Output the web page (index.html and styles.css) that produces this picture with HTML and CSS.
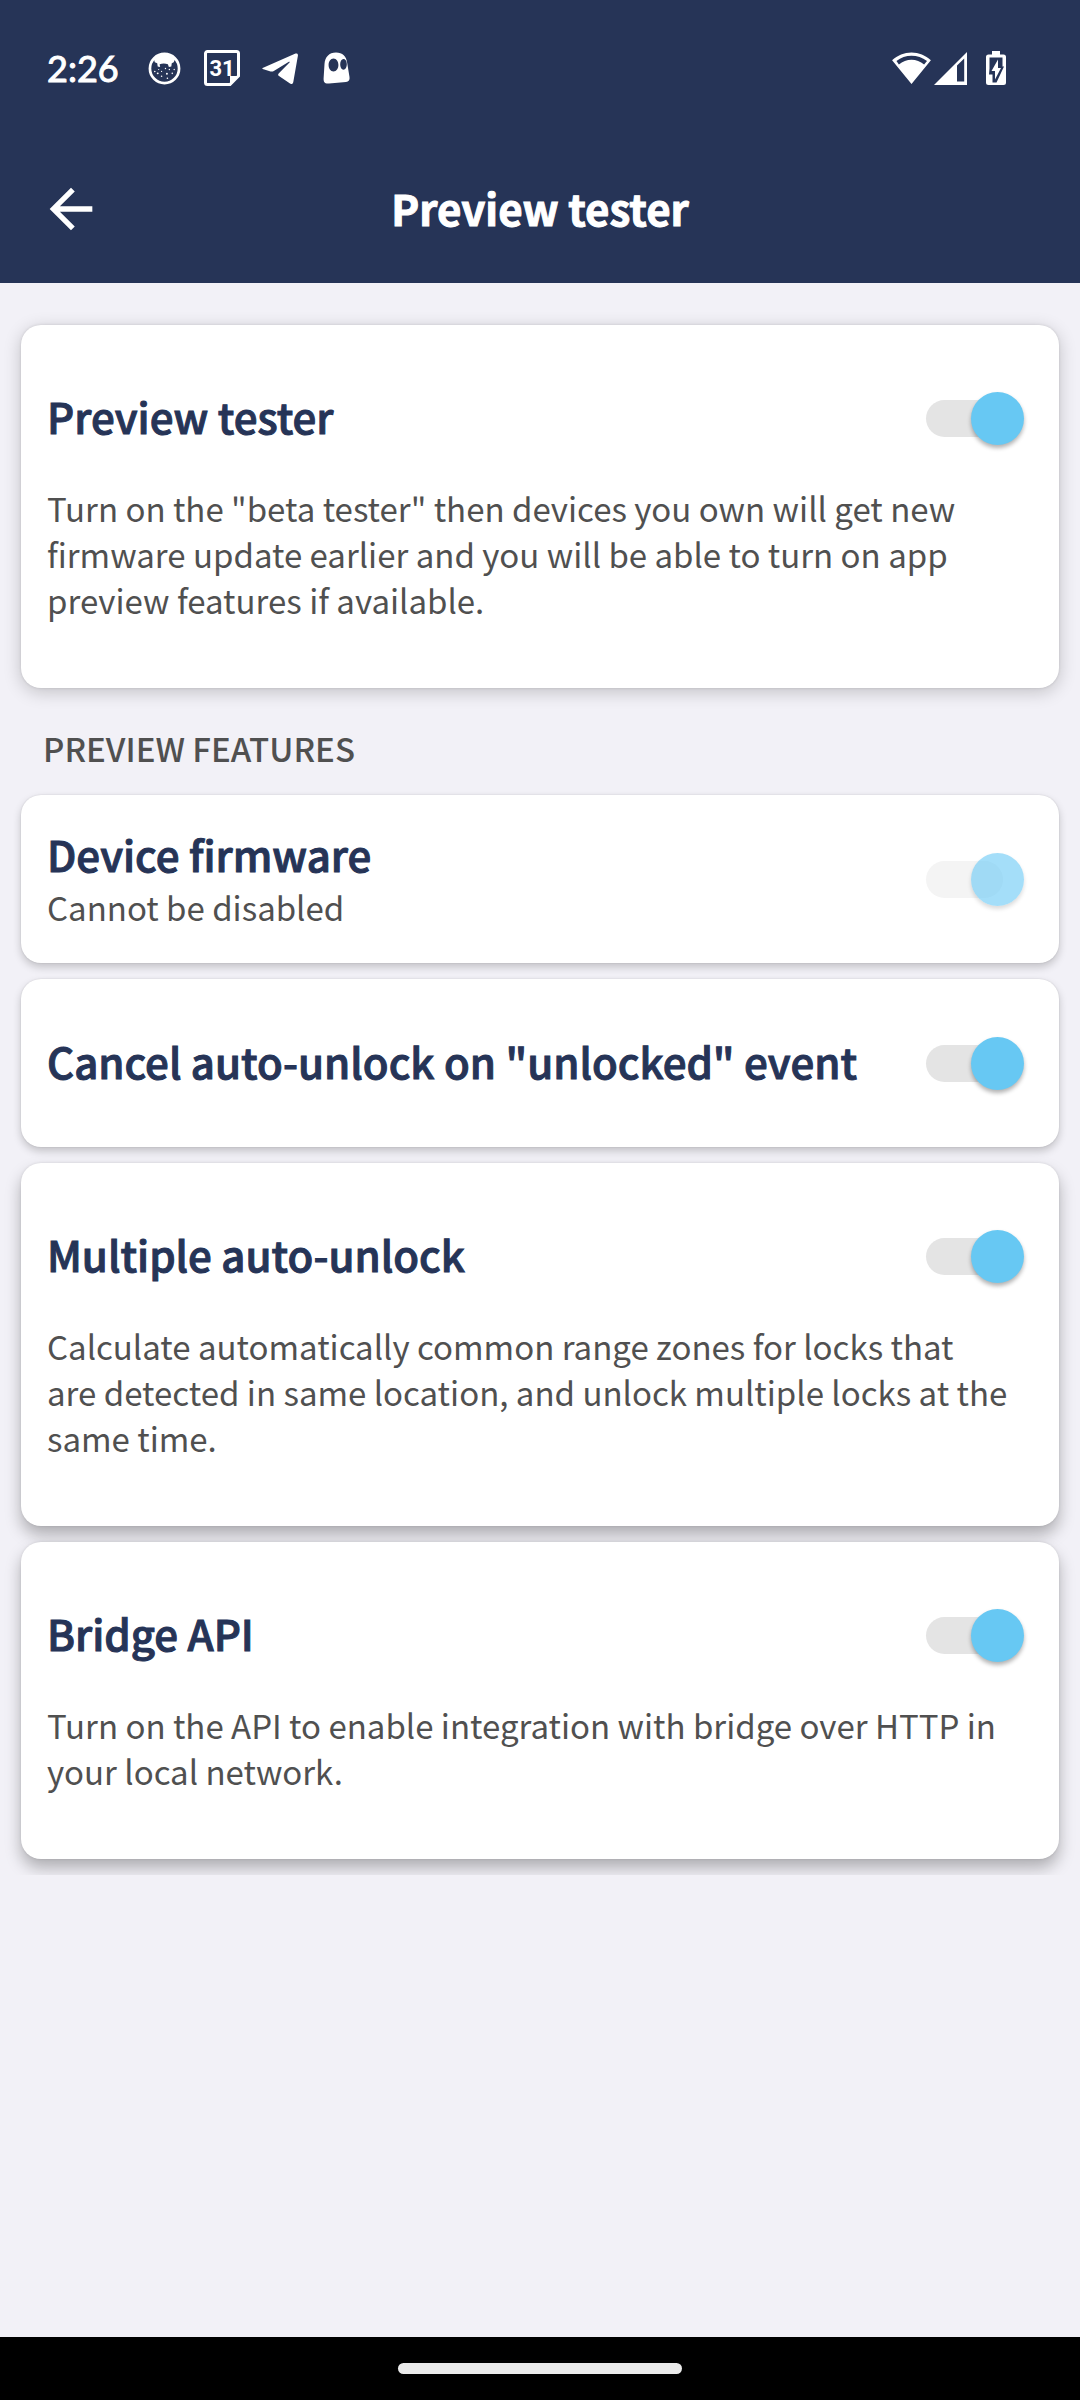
FILE: index.html
```html
<!DOCTYPE html>
<html lang="en">
<head>
<meta charset="utf-8">
<meta name="viewport" content="width=device-width, initial-scale=1">
<title>Preview tester</title>
<link rel="stylesheet" href="styles.css">
</head>
<body>
<header class="top">
  <div class="status">
    <div class="status-group">
      <span class="clock">2:26</span>
      <svg class="icon-cat" viewBox="0 0 34 34" aria-hidden="true">
        <circle cx="17" cy="17" r="15" fill="none" stroke="#fff" stroke-width="2.800"/>
        <path fill="#fff" d="M6 7C9 3.500 13 2 17 2s8 1.500 11 5l-1.500 3.500-2 1-.5 3.500-2.500.5-1-3c-2.500-1-6-1-8.500 0l.5 3-2.500-.5-.5-3.500L7 10.500z"/>
        <g fill="#fff"><circle cx="7" cy="20" r=".8"/><circle cx="10" cy="22" r="1"/><circle cx="14" cy="20" r=".6"/><circle cx="18" cy="17" r=".7"/><circle cx="19.500" cy="22.500" r="1"/><circle cx="22" cy="18" r=".7"/><circle cx="25" cy="22" r=".8"/><circle cx="14" cy="25" r=".8"/><circle cx="20" cy="27" r=".8"/><circle cx="27" cy="18" r=".7"/><circle cx="11" cy="18" r=".6"/></g>
      </svg>
      <svg class="icon-calendar" viewBox="0 0 36 36" aria-hidden="true">
        <path d="M3.500 1.500h29a2 2 0 0 1 2 2V26l-8.500 8.500H3.500a2 2 0 0 1-2-2v-29a2 2 0 0 1 2-2z" fill="none" stroke="#fff" stroke-width="3"/>
        <path d="M26 34.500V26h8.500z" fill="#fff"/>
        <text x="18" y="25.500" text-anchor="middle" class="day">31</text>
      </svg>
      <svg class="icon-plane" viewBox="0 0 36 31" aria-hidden="true">
        <path fill="#fff" d="M1.200 14.700 33.500.600c1.600-.600 2.700.300 2.400 2.200L31.300 29c-.4 2-1.700 2.500-3.300 1.600l-11-7.500c-1.200-.9-1.100-1.800-.1-2.800L27.500 9.600c.7-.8-.1-1.200-1-.6L11.800 18c-1 .6-2 .8-3.200.4L1.500 16.200c-1.500-.4-1.500-1-.3-1.500z"/>
      </svg>
      <svg class="icon-ghost" viewBox="0 0 27 32" aria-hidden="true">
        <path fill="#fff" fill-rule="evenodd" d="M13 .500c6.500 0 10.500 4 11.200 10.500l2.300 14c.5 3-.8 4.500-3.500 5L6 31.500c-4 .4-5.500-1-5.400-5L1.500 12C2 5 6 .500 13 .500zM10.500 6.500C7.500 6.500 5.600 9.500 5.600 13s1.900 6.500 4.900 6.500 4.900-3 4.900-6.500-1.900-6.500-4.900-6.500zM20.500 7c-2 0-3.300 2.400-3.300 5.300s1.300 5.400 3.300 5.400 3.300-2.500 3.300-5.400S22.500 7 20.500 7z"/>
      </svg>
    </div>
    <div class="status-group">
      <svg class="icon-wifi" viewBox="0 0 40 33" aria-hidden="true">
        <path fill="#fff" fill-rule="evenodd" d="M20 33 0 8.500C5.500 3.500 12.500.500 20 .500s14.500 3 20 8zM7 13c7.500-6.700 18.500-6.700 26 0l3-3.800C26.500 2 13.500 2 4.500 9.200z"/>
      </svg>
      <svg class="icon-signal" viewBox="0 0 33 33" aria-hidden="true">
        <path fill="#fff" fill-rule="evenodd" d="M33 0v33H0zM23 13.500V29.500h7.200V6.500z"/>
      </svg>
      <svg class="icon-battery" viewBox="0 0 20 34" aria-hidden="true">
        <path fill="#fff" d="M6 0h8v3.500h3.500A2.500 2.500 0 0 1 20 6v25.500a2.500 2.500 0 0 1-2.500 2.500h-15A2.500 2.500 0 0 1 0 31.500V6a2.500 2.500 0 0 1 2.500-2.500H6z"/>
        <path fill="#263457" d="M3.500 6.500h13v9l1.500 0-7.500 16H6.500v-8H3l.5-6z"/>
        <path fill="#fff" d="M12 8.500v8.500h3L9 28.500V20H5.500z"/>
      </svg>
    </div>
  </div>
  <div class="appbar">
    <button class="back" type="button" aria-label="Back">
      <svg viewBox="0 0 24 24" aria-hidden="true"><path fill="#fff" d="M20 11H7.830l5.590-5.590L12 4l-8 8 8 8 1.410-1.410L7.830 13H20z"/></svg>
    </button>
    <h1 class="appbar-title">Preview tester</h1>
  </div>
</header>

<main class="content">
  <div class="list">
    <section class="card card-detail">
      <div class="row">
        <label class="title" for="preview">Preview tester</label>
        <input class="switch" type="checkbox" role="switch" id="preview" checked>
      </div>
      <p class="text">Turn on the "beta tester" then devices you own will get new firmware update earlier and you will be able to turn on app preview features if available.</p>
    </section>

    <h2 class="group-label">PREVIEW FEATURES</h2>

    <div class="group">
      <section class="card card-short shade-low">
        <div class="row">
          <div class="stack">
            <label class="title" for="firmware">Device firmware</label>
            <p class="subtitle">Cannot be disabled</p>
          </div>
          <input class="switch" type="checkbox" role="switch" id="firmware" checked disabled>
        </div>
      </section>
      <section class="card card-short shade-low">
        <div class="row">
          <label class="title" for="cancel">Cancel auto-unlock on "unlocked" event</label>
          <input class="switch" type="checkbox" role="switch" id="cancel" checked>
        </div>
      </section>
      <section class="card card-detail shade-high">
        <div class="row">
          <label class="title" for="multiple">Multiple auto-unlock</label>
          <input class="switch" type="checkbox" role="switch" id="multiple" checked>
        </div>
        <p class="text">Calculate automatically common range zones for locks that<br>are detected in same location, and unlock multiple locks at the same time.</p>
      </section>
      <section class="card card-detail shade-high">
        <div class="row">
          <label class="title" for="bridge">Bridge API</label>
          <input class="switch" type="checkbox" role="switch" id="bridge" checked>
        </div>
        <p class="text">Turn on the API to enable integration with bridge over HTTP in your local network.</p>
      </section>
    </div>
  </div>
</main>

<footer class="navbar"><div class="handle"></div></footer>
</body>
</html>
```
FILE: styles.css
```css
* {
  box-sizing: border-box;
}

body {
  margin: 0;
  min-height: 100vh;
  display: flex;
  flex-direction: column;
  background: #f2f1f7;
  color: #505050;
  font-family: "Noto Sans CJK SC", "Noto Sans", sans-serif;
}

h1, h2, p {
  margin: 0;
}

.top {
  background: #263457;
  color: #fff;
}

.status {
  height: 136px;
  padding: 0 74px 0 47px;
  display: flex;
  align-items: center;
  justify-content: space-between;
}

.status-group {
  display: flex;
  align-items: center;
}

.status svg {
  display: block;
}

.clock {
  width: 101px;
  font: 400 36px/48px Lato, sans-serif;
  -webkit-text-stroke: 1px currentColor;
}

.icon-cat { width: 33px; height: 33px; margin-right: 23px; }
.icon-calendar { width: 36px; height: 36px; margin-right: 22px; }
.icon-plane { width: 36px; height: 31px; margin-right: 25px; }
.icon-ghost { width: 27px; height: 32px; }
.icon-wifi { width: 39px; height: 32px; margin-right: 3px; }
.icon-signal { width: 33px; height: 33px; margin-right: 19px; }
.icon-battery { width: 20px; height: 34px; }

.day {
  font: 700 22px Roboto, sans-serif;
  fill: #fff;
}

.appbar {
  height: 147px;
  padding: 0 39px;
  display: grid;
  grid-template-columns: 64px 1fr 64px;
  align-items: start;
}

.back {
  width: 64px;
  height: 64px;
  margin-top: 41px;
  padding: 0;
  border: 0;
  background: none;
}

.back svg {
  display: block;
  width: 64px;
  height: 64px;
}

.appbar-title {
  margin-top: 42px;
  text-align: center;
  font-size: 42px;
  line-height: 60px;
  font-weight: 700;
  -webkit-text-stroke: 1px currentColor;
}

.content {
  flex: 1;
}

.list {
  padding: 42px 21px 16px;
  overflow: hidden;
}

.card {
  background: #fff;
  border-radius: 20px;
  box-shadow: 0 4px 18px rgba(0, 0, 0, 0.2), 0 0 3px rgba(0, 0, 0, 0.12);
}

.shade-low {
  box-shadow: 0 4px 9px rgba(0, 0, 0, 0.2), 0 0 2px rgba(0, 0, 0, 0.12);
}

.shade-high {
  box-shadow: 0 9px 16px rgba(0, 0, 0, 0.28), 0 0 3px rgba(0, 0, 0, 0.1);
}

.card-detail {
  padding: 42px 35px 65px 26px;
}

.card-detail .row {
  height: 102px;
}

.card-short {
  padding: 31px 35px 31px 26px;
}

.card-short .row {
  height: 106px;
}

.row {
  display: flex;
  align-items: center;
  justify-content: space-between;
}

.row > .title,
.stack {
  padding-bottom: 4px;
}

.stack {
  display: flex;
  flex-direction: column;
}

.title {
  color: #263457;
  font-size: 42px;
  line-height: 60px;
  font-weight: 500;
  -webkit-text-stroke: 1px currentColor;
}

.text,
.subtitle {
  font-size: 33px;
  line-height: 46px;
  font-weight: 400;
}

.text {
  margin-top: 16px;
}

.group-label {
  padding: 37px 22px 24px;
  font-size: 33px;
  line-height: 46px;
  font-weight: 500;
}

.group {
  display: flex;
  flex-direction: column;
  gap: 16px;
}

.switch {
  appearance: none;
  position: relative;
  flex: none;
  width: 98px;
  height: 53px;
  margin: 0;
}

.switch::before {
  content: "";
  position: absolute;
  left: 0;
  top: 8px;
  width: 77px;
  height: 37px;
  border-radius: 19px;
  background: #e4e4e4;
}

.switch::after {
  content: "";
  position: absolute;
  left: 0;
  top: 0;
  width: 53px;
  height: 53px;
  border-radius: 50%;
  background: #67c8f3;
  box-shadow: 0 3px 4px rgba(0, 0, 0, 0.3);
}

.switch:checked::after {
  left: 45px;
}

.switch:disabled::before {
  background: #f4f4f4;
}

.switch:disabled::after {
  background: rgba(103, 200, 245, 0.6);
  box-shadow: 0 3px 4px rgba(0, 0, 0, 0.14);
}

.navbar {
  height: 63px;
  background: #000;
  display: flex;
  align-items: center;
  justify-content: center;
}

.handle {
  width: 284px;
  height: 11px;
  border-radius: 6px;
  background: #ebebeb;
}
```
